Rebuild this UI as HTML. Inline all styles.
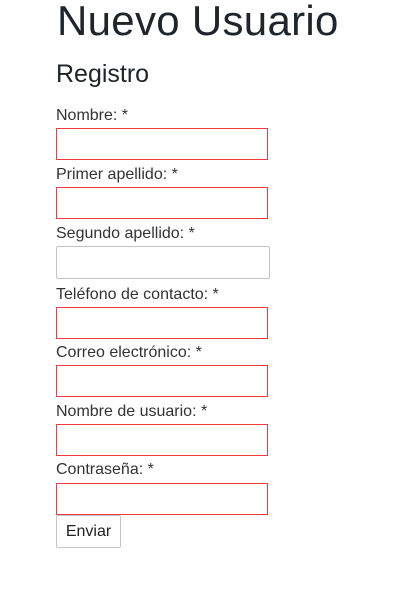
<!DOCTYPE html>
<html><head><style>
body{margin:0;width:420px;height:595px;background:#fff;font-family:"Liberation Sans",sans-serif;color:#212529;position:relative;overflow:hidden}
.a{position:absolute;left:56px;white-space:nowrap}
h1{position:absolute;left:57px;top:-3px;margin:0;font-size:42px;font-weight:500;letter-spacing:0.3px}
h2{position:absolute;left:56px;top:60px;margin:0;font-size:25px;font-weight:400}
.l{font-size:16px;color:#333}
.i{position:absolute;left:56px;width:210px;height:30px;border:1px solid #f03c3c;box-sizing:content-box}
.g{border-color:#c4c4c4;width:212px;border-radius:2px}
.b{position:absolute;left:56px;top:515px;width:63px;height:31px;border:1px solid #c6c6c6;border-radius:2px;font-size:16px;line-height:31px;text-align:center;color:#222}
</style></head><body>
<h1>Nuevo Usuario</h1>
<h2>Registro</h2>
<div class="a l" style="top:107px">Nombre: *</div>
<div class="i" style="top:128px"></div>
<div class="a l" style="top:166px">Primer apellido: *</div>
<div class="i" style="top:187px"></div>
<div class="a l" style="top:225px">Segundo apellido: *</div>
<div class="i g" style="top:246px;height:31px"></div>
<div class="a l" style="top:286px">Teléfono de contacto: *</div>
<div class="i" style="top:307px"></div>
<div class="a l" style="top:344px">Correo electrónico: *</div>
<div class="i" style="top:365px"></div>
<div class="a l" style="top:403px">Nombre de usuario: *</div>
<div class="i" style="top:424px"></div>
<div class="a l" style="top:461px">Contraseña: *</div>
<div class="i" style="top:483px"></div>
<div class="b">Enviar</div>
</body></html>
